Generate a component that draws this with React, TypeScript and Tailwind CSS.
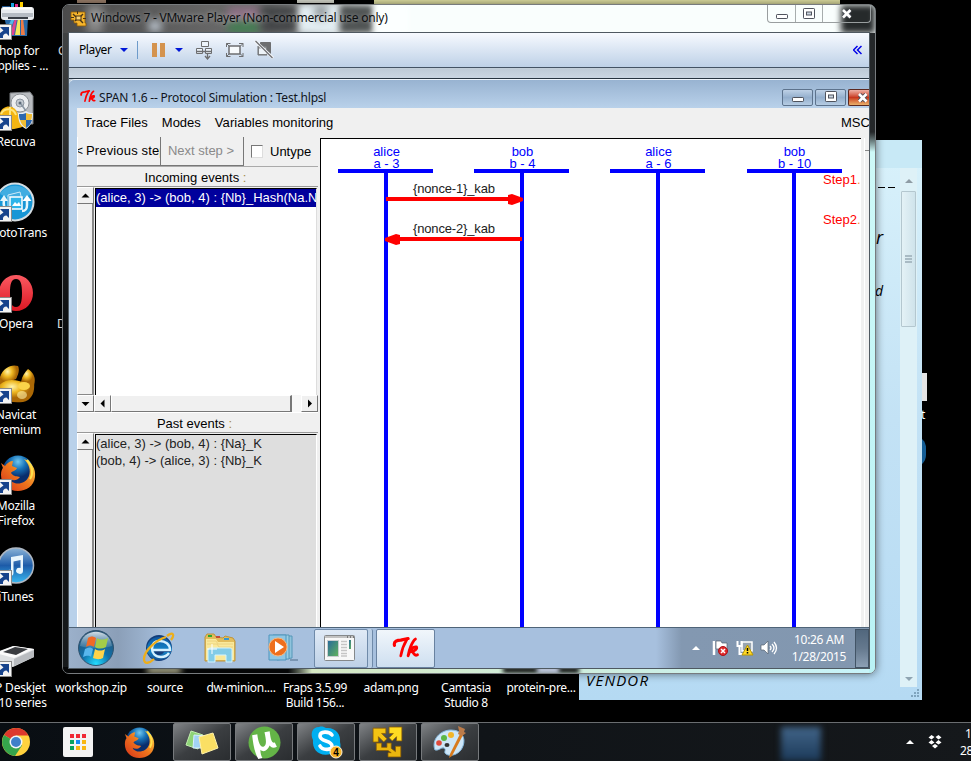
import type { ReactNode } from "react";

const UI = "font-['Noto_Sans',sans-serif]";
const TK = "font-['Liberation_Sans',Arial,sans-serif]";

/* ---------- Icons ---------- */

function ShortcutArrow() {
  return (
    <svg className="absolute left-0 bottom-0" width="12" height="16" viewBox="0 0 12 16">
      <rect x="-4" y="0.5" width="15.5" height="15" fill="#f4f4f4" stroke="#8a8a8a" />
      <path d="M0 3h9v9L6.500 9.500C4 9.500 2.500 11 3 14H0V9L3.500 6.500z" fill="#17438c" />
    </svg>
  );
}

function PrinterInkIcon() {
  return (
    <svg width="36" height="38" viewBox="0 0 36 38">
      <path d="M11 3h3v5h-3z" fill="#1ba5e0" />
      <path d="M15 4h3v5h-3z" fill="#e52b8a" />
      <path d="M20 2h3v5h-3z" fill="#ffcf00" />
      <path d="M2 6h8v4H2z" fill="#1b4f86" />
      <path d="M4 17h24l-1 19H9z" fill="#2a6aa8" />
      <path d="M12 18l-8 17h4l7-17z" fill="#53b9e9" />
      <path d="M15 18l-5 17h4l3-17z" fill="#df4390" />
      <path d="M18 18l-3 17h5v-17z" fill="#f4e75c" />
      <path d="M21 18v17h4l-2-17z" fill="#ee7b46" />
      <rect x="1" y="7" width="33" height="13" rx="3" fill="#e7eaee" />
      <path d="M2 13h31v4H2z" fill="#b5bbc3" />
      <path d="M8 17h20v2H8z" fill="#383d45" />
      <path d="M3 8.500h29" stroke="#fff" strokeWidth="2" />
    </svg>
  );
}

function RecuvaIcon() {
  return (
    <svg width="36" height="40" viewBox="0 0 36 40">
      <path d="M10 2l20-1 3 4v28H10z" fill="#b9bcc0" stroke="#7b7e82" />
      <circle cx="20" cy="12" r="9" fill="#eceef0" stroke="#8b9095" />
      <circle cx="20" cy="12" r="4" fill="#c3cad1" stroke="#8d96a0" />
      <circle cx="20" cy="12" r="1.500" fill="#5d6b7a" />
      <path d="M26 20l-5-7" stroke="#8794a1" strokeWidth="1.500" />
      <path d="M0 22c3-9 16-9 18 2l6 4v7c-8 4-17 4-24 1z" fill="#f4b512" />
      <path d="M1 23c3-6 12-7 15 1M10 16v12" stroke="#ffe57c" strokeWidth="2" fill="none" />
      <path d="M26 20c3 2 5 2 7 2 0 8-2 13-7 16-6-3-8-8-8-16 3 0 5 0 8-2z" fill="#e7edf4" />
      <path d="M26 22v7h-6c-1-2-1-4-1-6 3 0 5-0 7-1zM26 29h6c-1 4-3 6-6 8z" fill="#2c67ae" />
      <path d="M26 22c2 1 4 1 6 1 0 2 0 4-1 6h-5zM20 29h6v8c-3-2-5-4-6-8z" fill="#f1bd35" />
    </svg>
  );
}

function PhotoTransIcon() {
  return (
    <svg width="36" height="40" viewBox="0 0 36 40">
      <circle cx="15" cy="20" r="18.500" fill="#1796d6" stroke="#d5dde2" strokeWidth="2" />
      <path d="M0 12C6 1 24 1 31 12 23 18 10 18 0 12z" fill="#6bc3ec" opacity=".5" />
      <path d="M8 30C4 28 3 24 4 17" stroke="#e6f6fc" strokeWidth="2.500" fill="none" />
      <path d="M0 19l4-6 4 6z" fill="#e6f6fc" />
      <path d="M22 29c4 0 5-2 5-6v-6" stroke="#e6f6fc" strokeWidth="2.500" fill="none" />
      <path d="M22.500 19l4.500-6 4.500 6z" fill="#fff" />
      <path d="M8 25V13l12-3 1 4" stroke="#cdeaf8" fill="none" />
      <rect x="10" y="15" width="12" height="12" fill="#2eb4e9" stroke="#fff" strokeWidth="1.500" />
      <path d="M12 24l3-4 2 2 2-2 2 4z" fill="#fff" />
    </svg>
  );
}

function OperaIcon() {
  return (
    <svg width="36" height="40" viewBox="0 0 36 40">
      <defs>
        <linearGradient id="opera" x2="0" y2="1">
          <stop stopColor="#fb5a62" />
          <stop offset="1" stopColor="#dc1722" />
        </linearGradient>
      </defs>
      <path fillRule="evenodd" fill="url(#opera)" d="M16 2c10 0 17 8 17 18s-7 18-17 18-17-8-17-18S6 2 16 2zm0 4c-5 0-6 6-6 14s1 14 6 14 6-6 6-14-1-14-6-14z" />
    </svg>
  );
}

function NavicatIcon() {
  return (
    <svg width="36" height="40" viewBox="0 0 36 40">
      <defs>
        <radialGradient id="navi" cx=".4" cy=".3">
          <stop stopColor="#fff4ab" />
          <stop offset=".5" stopColor="#eeb822" />
          <stop offset="1" stopColor="#ab6805" />
        </radialGradient>
      </defs>
      <path d="M0 13C3 4 11 0 18 2c2 4 0 9-2 13L0 22z" fill="url(#navi)" />
      <path d="M28 5c6 4 8 9 6 16-5-1-9-1-13-3 1-6 4-10 7-13z" fill="url(#navi)" />
      <path d="M-3 24c6-9 15-9 22-7 6 2 11 3 15 2 1 9-2 17-11 19-8 1-16 0-21-4z" fill="url(#navi)" />
      <ellipse cx="24" cy="22" rx="6" ry="4" fill="#fbd34a" />
      <ellipse cx="22" cy="31" rx="5" ry="4" fill="#fff1a8" opacity=".6" />
    </svg>
  );
}

function FirefoxIcon({ size }: { size: number }) {
  return (
    <svg width={size} height={size} viewBox="0 0 36 36">
      <defs>
        <radialGradient id="fxb" cx=".5" cy=".2">
          <stop stopColor="#72c8ef" />
          <stop offset=".5" stopColor="#1672b8" />
          <stop offset="1" stopColor="#0a2d6c" />
        </radialGradient>
        <linearGradient id="fxo" x1="0" x2="1" y1="1" y2="0">
          <stop stopColor="#d6301a" />
          <stop offset=".5" stopColor="#ee761d" />
          <stop offset="1" stopColor="#ffe04b" />
        </linearGradient>
      </defs>
      <circle cx="18" cy="16" r="15.500" fill="url(#fxb)" />
      <path d="M1 8l4 3c2-3 5-5 8-5l-1 5 5 2c-1 3-5 3-6 5 3 4 6 3 9 4-3 4-7 4-10 2 2 6 15 7 19-3 2-6 0-12-5-17 8 3 12 10 11 18-1 9-9 14-17 14C8 36 1 29 1 20c0-4 1-6 2-7z" fill="url(#fxo)" />
      <path d="M27 5c5 5 7 13 3 19" stroke="#ffe04b" strokeWidth="2" fill="none" />
    </svg>
  );
}

function ITunesIcon() {
  return (
    <svg width="36" height="38" viewBox="0 0 36 38">
      <defs>
        <linearGradient id="itunes" x2="0" y2="1">
          <stop stopColor="#8bb4d8" />
          <stop offset=".5" stopColor="#1d5ba8" />
          <stop offset="1" stopColor="#38b9f2" />
        </linearGradient>
      </defs>
      <circle cx="16" cy="19.500" r="17.500" fill="url(#itunes)" stroke="#aeb7c2" strokeWidth="1.500" />
      <path d="M11 11l12-2v16a3.500 3 0 1 1-2.500-3V14L13.500 15.500V27a3.500 3 0 1 1-2.500-3z" fill="#e8f5fc" />
    </svg>
  );
}

function DeskjetIcon() {
  return (
    <svg className="mt-[2px]" width="36" height="36" viewBox="0 0 36 36">
      <path d="M-6 14l19-7 21 3v8L13 28-6 25z" fill="#dfe1e3" />
      <path d="M-5 14l19-7 20 3-20 9z" fill="#fbfbfb" />
      <path d="M3 13l12-5 13 2-12 6z" fill="#3a3c40" />
      <path d="M14 20l20-9v7L14 27z" fill="#b9bcc0" />
    </svg>
  );
}

function VmwareIcon({ size }: { size: number }) {
  return (
    <svg width={size} height={size} viewBox="0 0 30 30">
      <g stroke="#8b5b00" strokeWidth=".7">
        <path d="M1 2h12v5H9l5 5-3 3-5-5v5H1z" fill="#f4c413" />
        <path d="M16 1h12v13h-5v-4l-4 4-3-3 4-4h-4z" fill="#ffdb22" />
        <path d="M4 16h5v4h5v-4h4v5l4 3v-5h5v10H15v-4h3l-3-2H4z" fill="#eab60e" />
      </g>
    </svg>
  );
}

/* Small title-bar version of the VMware mark */
function VmwareMark() {
  return (
    <svg width="17" height="17" viewBox="0 0 17 17">
      <path d="M1 2h14v11h1v3H7v-3H4v-3H1z" fill="#f6b52c" stroke="#8d5a05" strokeWidth=".8" />
      <path d="M3 4l3 3M13 4l-3 3M5 11l2-2M13 13l-3-3" stroke="#4a3514" strokeWidth="1.400" />
      <rect x="6" y="6" width="5" height="4" fill="#f9d272" stroke="#4a3514" />
      <path d="M7.500 1v3M1 7.500h3M13 8.500h3" stroke="#4a3514" />
    </svg>
  );
}

function TkLogo({ width, height }: { width: number; height: number }) {
  return (
    <svg className="shrink-0" width={width} height={height} viewBox="0 0 26 21" fill="none" stroke="#ff0000" strokeLinecap="round" strokeLinejoin="round">
      <path d="M2 8C1 4 5 3 8 3l7-1.500" strokeWidth="3" />
      <path d="M14 2C11 7 9 12 8 18" strokeWidth="2.600" />
      <path d="M22 2c-3 2-6 10-7 16 2-6 5-9 8-8.500 1 2-2 4-5 4.500 3 0 2 5 6 3" strokeWidth="2.700" />
    </svg>
  );
}

function ChromeIcon() {
  return (
    <svg width="28" height="28" viewBox="0 0 28 28">
      <circle cx="14" cy="14" r="14" fill="#ffd23e" />
      <path d="M14 14L2 7A14 14 0 0 1 26.500 7.500H14z" fill="#dc382d" />
      <path d="M14 14L2 7A14 14 0 0 0 13 28l7-10.500z" fill="#35a44c" />
      <circle cx="14" cy="14" r="6.500" fill="#f2f5f7" />
      <circle cx="14" cy="14" r="5" fill="#3e7fc9" />
    </svg>
  );
}

function AppsIcon() {
  const colors = ["#f02a35", "#f02a35", "#f02a35", "#0ba35e", "#168bf2", "#f9b713", "#0ba35e", "#f9b713", "#f9b713"];
  return (
    <div className="grid h-[30px] w-[30px] grid-cols-[4px_4px_4px] content-center justify-center gap-[2px] rounded-[2px] bg-[#f3f3f3]">
      {colors.map((c, i) => (
        <span key={i} className="h-[4px] w-[4px]" style={{ backgroundColor: c }} />
      ))}
    </div>
  );
}

function StickyIcon() {
  return (
    <svg width="34" height="28" viewBox="0 0 34 28">
      <path d="M6 3l12 4-5 14L1 17z" fill="#8ed477" stroke="#c2edaf" />
      <path d="M9 7l14 1-1 12-14 0z" fill="#a2d3f5" stroke="#d8efff" />
      <path d="M14 9l14-4 5 15-16 6z" fill="#fadf64" stroke="#fff1a7" />
    </svg>
  );
}

function UtorrentIcon() {
  return (
    <svg width="33" height="33" viewBox="0 0 32 32">
      <circle cx="16" cy="16" r="15.500" fill="#64b447" />
      <path d="M4 9l5-1c1 8 3 13 6 12s3-5 1-14l5-1c1 8 2 12 5 11l2 4c-3 2-6 1-7-1-2 5-6 7-9 4 0 4 1 6 2 8l-4 1C6 25 5 17 4 9z" fill="#fff" />
    </svg>
  );
}

function SkypeIcon() {
  return (
    <svg width="36" height="34" viewBox="0 0 36 34">
      <path d="M11 2c3-1 5 0 7 1 9-1 15 6 14 14 2 7-2 13-9 12-12 3-19-4-18-14C2 9 4 2 11 2z" fill="#00aff0" />
      <path d="M24 10c-3-4-12-4-12 1 0 6 12 4 12 10 0 5-10 4-12 0" fill="none" stroke="#fff" strokeWidth="3.600" strokeLinecap="round" />
      <circle cx="28" cy="27" r="6" fill="#f8b42a" stroke="#fff4d7" />
      <text x="28" y="30.500" textAnchor="middle" fontSize="10" fontWeight="bold" fontFamily="Liberation Sans">4</text>
    </svg>
  );
}

function PaintIcon() {
  return (
    <svg width="34" height="34" viewBox="0 0 34 34">
      <path d="M2 25C-2 15 7 5 18 5s15 8 12 16c-3 9-13 11-17 8-3-2 1-4-2-6-3-1-5 3-9 2z" fill="#cde6f8" stroke="#86b8dd" />
      <circle cx="6" cy="18" r="2.800" fill="#df4a3b" />
      <circle cx="11" cy="13" r="3" fill="#5cb746" />
      <circle cx="18" cy="10" r="3" fill="#f1b52a" />
      <ellipse cx="14" cy="20" rx="2.500" ry="2" fill="#333" />
      <path d="M27 9l3 1-11 21-3 2 1-4z" fill="#d77a1d" />
      <path d="M25 1l7 3-1 3 2 1-4 3-4-2 1-3z" fill="#bb7b4a" />
    </svg>
  );
}

function StartOrb() {
  return (
    <svg width="38" height="38" viewBox="0 0 38 38">
      <defs>
        <radialGradient id="orb" cx=".5" cy=".95" r=".9">
          <stop stopColor="#24ddff" />
          <stop offset=".45" stopColor="#1070aa" />
          <stop offset="1" stopColor="#285375" />
        </radialGradient>
        <linearGradient id="shine" x2="0" y2="1">
          <stop stopColor="#f0f7fb" stopOpacity=".85" />
          <stop offset="1" stopColor="#b0cde0" stopOpacity=".15" />
        </linearGradient>
      </defs>
      <circle cx="19" cy="19" r="17.500" fill="url(#orb)" stroke="#30536f" />
      <path d="M3 17C5-2 33-2 35 17 25 20 13 20 3 17z" fill="url(#shine)" />
      <path d="M11 9c3-2 5-2 8 0l-2 9c-3-2-5-2-8 0z" fill="#f06a26" />
      <path d="M20 9c3 2 7 2 11 0l-2 9c-4 2-8 2-11 0z" fill="#a3cc48" />
      <path d="M8 20c3-2 6-2 8 0l-2 8c-2-2-5-1-8 0z" fill="#58b6ed" />
      <path d="M18 20c3 2 7 2 10 0l-2 9c-4 2-7 1-10 0z" fill="#ffd34a" />
    </svg>
  );
}

function IEIcon() {
  return (
    <svg width="34" height="34" viewBox="0 0 34 34">
      <defs>
        <linearGradient id="ie" x2="0" y2="1">
          <stop stopColor="#0f57a0" />
          <stop offset=".6" stopColor="#1487ca" />
          <stop offset="1" stopColor="#145394" />
        </linearGradient>
      </defs>
      <circle cx="18" cy="17" r="13" fill="#123d7a" />
      <path d="M18 6c-8 0-12 6-12 12s5 11 12 11c6 0 10-3 12-8h-7c-2 4-9 4-10-1h18C31 11 26 6 18 6z" fill="url(#ie)" />
      <path d="M12 19h17c0-6-5-9-10-9-6 0-8 4-8 8s3 8 9 8c4 0 6-1 8-4" fill="none" stroke="#d3f0ff" strokeWidth="2.400" />
      <path d="M26 5c6-5 8-1 4 4M25 6C15 9 3 20 3 28c0 6 6 4 10 0" fill="none" stroke="#edae1b" strokeWidth="2.300" />
    </svg>
  );
}

function ExplorerIcon() {
  return (
    <svg width="34" height="32" viewBox="0 0 34 32">
      <path d="M2 5l2-3h7l2 3 7 1 2-2 8 2 2 3v20H2z" fill="#e2bd5c" stroke="#bf943b" />
      <path d="M3 7h10l2 3h16v18H3z" fill="#fae99b" />
      <path d="M4 9h9l2 3h15M4 12h10l2 3h14" stroke="#ecd27f" fill="none" />
      <path d="M5 3h4v2H5z" fill="#2aa830" />
      <path d="M13 4h4v2h-4z" fill="#c34b37" />
      <path d="M21 6h5v2h-5z" fill="#3797d0" />
      <path d="M5 30V18c0-2 2-2 3-2h18c3 0 3 1 3 3v11h-6v-7H12v7z" fill="#83cce7" stroke="#d3f4ff" />
      <path d="M9 12v10M4 17h10" stroke="#fff" strokeWidth="1" />
    </svg>
  );
}

function MediaPlayerIcon() {
  return (
    <svg width="34" height="30" viewBox="0 0 34 30">
      <path d="M11 3h15v22l-15 2z" fill="#8fc3dc" stroke="#5597b8" />
      <path d="M7 2h16v24H7z" fill="#9bcee3" stroke="#5597b8" />
      <path d="M3 2h17v25H3z" fill="#8fc6e3" stroke="#4e95bd" />
      <path d="M24 27h8" stroke="#6b87a5" strokeWidth="1.500" />
      <circle cx="12" cy="14" r="9" fill="#ee6f1d" stroke="#f9b77b" />
      <path d="M9 8l9 6-9 6z" fill="#fff" />
    </svg>
  );
}

function AppWindowIcon() {
  return (
    <svg width="31" height="26" viewBox="0 0 31 26">
      <defs>
        <linearGradient id="shot" x2="1" y2="1">
          <stop stopColor="#27689b" />
          <stop offset="1" stopColor="#62b45c" />
        </linearGradient>
      </defs>
      <rect x=".5" y=".5" width="30" height="25" rx="1" fill="#f8f8f8" stroke="#85888a" />
      <path d="M1 1h29v2H1z" fill="#c2c2c2" />
      <path d="M23 2h1m2 0h1m2 0h1" stroke="#333" />
      <rect x="3.500" y="5.500" width="11" height="16" fill="url(#shot)" stroke="#c9cdd0" />
      <path d="M17 6.500h6m-6 3h6m-6 3h6m-6 3h6m-6 3h6m-6 2.500h6" stroke="#c5c5c5" strokeWidth="1.500" />
      <path d="M25 5h2v9h-2z" fill="url(#shot)" />
    </svg>
  );
}

function WindowGlyph({ kind }: { kind: "min" | "max" | "close" }) {
  return (
    <svg width="14" height="12" viewBox="0 0 14 12">
      {kind === "min" && <rect x="1.500" y="6.500" width="11" height="4" rx=".7" fill="#fff" stroke="#4f535d" />}
      {kind === "max" && (
        <g fill="#fff" stroke="#4f535d">
          <rect x="1.500" y=".5" width="11" height="10" rx=".7" />
          <rect x="4.500" y="4" width="5" height="3" fill="#cad6e1" />
        </g>
      )}
      {kind === "close" && (
        <g fill="none">
          <path d="M3.500 2.500l6.500 6.500m0-6.500l-6.500 6.500" stroke="#4a4d56" strokeWidth="4.500" />
          <path d="M3 2l7.500 7.500m0-7.500l-7.500 7.500" stroke="#fff" strokeWidth="2.600" />
        </g>
      )}
    </svg>
  );
}

/* ---------- Host desktop ---------- */

function DesktopIcon({ top, label, children }: { top: number; label: string[]; children?: ReactNode }) {
  return (
    <div className="absolute left-[-32px] flex w-[96px] flex-col items-center" style={{ top }}>
      <div className="relative ml-[32px] mr-auto h-[40px] w-[36px]">
        {children}
        <ShortcutArrow />
      </div>
      <div className="mt-[3px] text-center text-[12px] leading-[15px] tracking-[-0.2px] whitespace-nowrap">
        {label.map((l) => <div key={l}>{l}</div>)}
      </div>
    </div>
  );
}

function FileLabel({ left, lines }: { left: number; lines: string[] }) {
  return (
    <div className="absolute top-[680px] w-[100px] text-center text-[12px] leading-[15px] tracking-[-0.3px] whitespace-nowrap" style={{ left: left - 50 }}>
      {lines.map((l) => <div key={l}>{l}</div>)}
    </div>
  );
}

function StickyNote() {
  const ink = "italic font-['Open_Sans',sans-serif] leading-[20px]";
  return (
    <div className="absolute left-[579px] top-[140px] h-[560px] w-[343px] bg-linear-to-b from-[#d9f2fb] via-[#c3e2f5] to-[#b5daf3] text-black">
      <div className="h-[28px] bg-[#c8e9f6]" />
      <div className="ml-auto mr-[5px] flex h-[519px] w-[17px] flex-col items-center bg-[#def1f7]">
        <div className="mt-[11px] border-x-[4px] border-b-[4px] border-x-transparent border-b-[#8f9ca4]" />
        <div className="mt-[8px] flex h-[136px] w-[15px] flex-col items-center justify-center gap-[1px] rounded-[1px] border border-[#b4c7cf] bg-linear-to-r from-[#e4f2f6] to-[#cfe3eb]">
          <span className="h-[2px] w-[7px] bg-[#a9bbc4]" />
          <span className="h-[2px] w-[7px] bg-[#a9bbc4]" />
          <span className="h-[2px] w-[7px] bg-[#a9bbc4]" />
        </div>
        <div className="mt-auto mb-[6px] border-x-[4px] border-t-[4px] border-x-transparent border-t-[#8fa4b1]" />
      </div>
      <svg className="absolute right-[2px] bottom-[2px]" width="9" height="9" viewBox="0 0 9 9" fill="#7fa4bd">
        <path d="M6 0h2v2H6zM3 3h2v2H3zM6 3h2v2H6zM0 6h2v2H0zM3 6h2v2H3zM6 6h2v2H6z" />
      </svg>
      <span className="absolute left-[299px] top-[47px] h-px w-[7px] bg-black" />
      <span className="absolute left-[309px] top-[47px] h-px w-[7px] bg-black" />
      <span className={`absolute left-[297px] top-[87px] text-[18px] ${ink}`}>r</span>
      <span className={`absolute left-[296px] top-[141px] text-[14px] ${ink}`}>d</span>
      <span className={`absolute left-[7px] top-[530px] text-[15px] tracking-[1.2px] ${ink}`}>VENDOR</span>
    </div>
  );
}

function TaskButton({ children }: { children: ReactNode }) {
  return (
    <div className="mr-[4px] flex h-[38px] w-[58px] shrink-0 items-center justify-center rounded-[2px] border border-[#777a7d] bg-linear-to-br from-[#808386] via-[#3b3e41] to-[#2a2d30]">
      {children}
    </div>
  );
}

function HostTaskbar() {
  return (
    <div className="absolute inset-x-0 top-[722px] flex h-[39px] items-center overflow-hidden border-t border-[#6a6d70] bg-linear-to-r from-[#090e13] via-[#101418] to-[#15181b]">
      <div className="ml-[2px] w-[61px] shrink-0"><ChromeIcon /></div>
      <div className="w-[61px] shrink-0"><AppsIcon /></div>
      <div className="w-[49px] shrink-0"><FirefoxIcon size={31} /></div>
      <TaskButton><StickyIcon /></TaskButton>
      <TaskButton><UtorrentIcon /></TaskButton>
      <TaskButton><SkypeIcon /></TaskButton>
      <TaskButton><VmwareIcon size={32} /></TaskButton>
      <TaskButton><PaintIcon /></TaskButton>
      <div className="ml-[298px] h-[34px] w-[40px] shrink-0 self-end bg-linear-to-b from-[#426589] to-[#1c3a59] blur-[3px]" />
      <div className="ml-[85px] shrink-0 border-x-[4px] border-b-[4px] border-x-transparent border-b-white" />
      <svg className="ml-[14px] shrink-0" width="14" height="14" viewBox="0 0 14 14" fill="#fff">
        <path d="M3.500 0l3 2-3 2.500L.500 2.500zM10.500 0l3 2.500-3 2L7.500 2zM3.500 5l3 2.500-3 2-3-2zM10.500 5l3 2.500-3 2-3-2zM4 11l3-2 3 2-3 2.500z" />
      </svg>
      <div className="ml-[18px] w-[60px] shrink-0 text-[12px] leading-[17px] tracking-[-0.3px] text-white">
        <div className="pl-[5px]">10:26</div>
        <div>28-01</div>
      </div>
    </div>
  );
}

/* ---------- SPAN window ---------- */

function ScrollButton({ dir }: { dir: "up" | "down" | "left" | "right" }) {
  const path = { up: "M.5 6.500h8L4.500 2.500z", down: "M.5 3h8L4.500 7z", left: "M6.500 .5v8L2.500 4.500z", right: "M3 .5v8l4-4z" }[dir];
  return (
    <div className="flex h-[17px] w-[17px] shrink-0 items-center justify-center border border-t-white border-l-white border-r-[#777] border-b-[#777] bg-[#f0f0f0]">
      <svg width="9" height="9" viewBox="0 0 9 9"><path d={path} fill="#000" /></svg>
    </div>
  );
}

function EventPanel() {
  return (
    <div className="flex h-[490px] w-[243px] shrink-0 flex-col text-[13px]">
      <div className="flex h-[30px] w-[241px] border-b border-[#aaa]">
        <div className="flex h-[29px] w-[84px] items-center overflow-hidden border-r border-b border-l border-[#777] border-l-white pb-px whitespace-nowrap">
          <span className="flex w-[5px] shrink-0 justify-end overflow-hidden">&lt;</span>
          <span className="ml-[3px] w-[74px] overflow-hidden tracking-[0.15px]">Previous step</span>
        </div>
        <div className="flex h-[29px] w-[83px] items-center justify-center border-r border-b border-[#777] pr-[2px] text-[#8a8a8a] whitespace-nowrap">Next step &gt;</div>
        <div className="mt-[8px] ml-[7px] h-[13px] w-[12px] border border-t-[#777] border-l-[#777] border-r-[#ddd] border-b-[#ddd] bg-white" />
        <span className="ml-[7px] leading-[30px]">Untype</span>
      </div>
      <div className="h-[20px] w-[241px] border-b border-[#999] pr-[4px] text-center leading-[22px]">Incoming events <span className="text-[#a58a4a]">:</span></div>
      <div className="flex h-[208px] w-[241px]">
        <div className="flex w-[17px] shrink-0 flex-col">
          <ScrollButton dir="up" />
          <div className="flex-1 border-r-2 border-b border-l border-[#888] border-l-white" />
        </div>
        <div className="mt-px ml-[1px] w-[222px] overflow-hidden border-t border-r border-l border-black border-r-[#ddd] bg-white whitespace-nowrap">
          <div className="h-[18px] bg-[#00009c] leading-[17px] text-white">(alice, 3) -&gt; (bob, 4) : {"{Nb}_Hash(Na.Nb)"}</div>
        </div>
      </div>
      <div className="flex h-[18px] w-[241px] border-b border-white">
        <ScrollButton dir="down" />
        <ScrollButton dir="left" />
        <div className="h-[17px] w-[181px] border border-r-2 border-[#777] border-t-white border-l-white" />
        <div className="h-[17px] w-[9px] bg-[#f7f7f7]" />
        <ScrollButton dir="right" />
      </div>
      <div className="h-[20px] w-[241px] border-b border-[#999] pr-[6px] text-center leading-[21px]">Past events <span className="text-[#a58a4a]">:</span></div>
      <div className="flex h-[194px] w-[241px]">
        <div className="flex w-[17px] shrink-0 flex-col">
          <ScrollButton dir="up" />
          <div className="flex-1 border-r-2 border-l border-[#888] border-l-white" />
        </div>
        <div className="mt-px ml-[1px] w-[222px] border-t border-r border-l border-black border-r-white bg-[#dedede] leading-[17px] text-[#222] whitespace-nowrap">
          <div>(alice, 3) -&gt; (bob, 4) : {"{Na}_K"}</div>
          <div>(bob, 4) -&gt; (alice, 3) : {"{Nb}_K"}</div>
        </div>
      </div>
    </div>
  );
}

const AGENTS = [
  { x: 386, bar: 338, name: "alice", id: "a - 3" },
  { x: 522, bar: 474, name: "bob", id: "b - 4" },
  { x: 658, bar: 610, name: "alice", id: "a - 6" },
  { x: 794, bar: 747, name: "bob", id: "b - 10" },
];

function SequenceChart() {
  return (
    <svg className="shrink-0 border-t border-l border-black bg-white" width="541" height="489" viewBox="321 139 540 488" fontFamily="Liberation Sans, Arial, sans-serif" fontSize="13">
      {AGENTS.map((a) => (
        <g key={a.x} fill="#0000ff" textAnchor="middle">
          <text x={a.x + 0.5} y="156">{a.name}</text>
          <text x={a.x + 0.5} y="168">{a.id}</text>
          <rect x={a.bar} y="169" width="95" height="4" />
          <rect x={a.x - 2} y="169" width="4" height="460" />
        </g>
      ))}
      <g fill="#ff0000">
        <rect x="386" y="197" width="130" height="4" />
        <path d="M508 195l4-1 11 4v3l-11 4-4-1z" />
        <rect x="392" y="237" width="130" height="4" />
        <path d="M400 235l-4-1-11 4v3l11 4 4-1z" />
        <text x="823" y="184">Step1<tspan fill="#ff8a30">.</tspan></text>
        <text x="823" y="224">Step2<tspan fill="#ff8a30">.</tspan></text>
      </g>
      <g fill="#222" textAnchor="middle">
        <text x="454" y="193" textLength="82">{"{nonce-1}_kab"}</text>
        <text x="454" y="233" textLength="82">{"{nonce-2}_kab"}</text>
      </g>
    </svg>
  );
}

function SpanWindow() {
  const buttons = "flex h-[17px] w-[31px] shrink-0 items-center justify-center rounded-[2px] border border-[#5d738d] bg-linear-to-b from-[#bed1e6] via-[#94afcd] to-[#b6cce3]";
  return (
    <div className="flex h-[548px] flex-col overflow-hidden rounded-tl-[6px] border-t border-[#eef5fc] bg-[#b9d1ea] pl-[8px]">
      <div className="-ml-[8px] flex h-[28px] shrink-0 items-center bg-linear-to-b from-[#98b3d1] to-[#b9d1ea] pl-[11px]">
        <div className="mt-[5px]"><TkLogo width={16} height={13} /></div>
        <span className={`mt-[7px] ml-[3px] text-[12px] tracking-[-0.21px] whitespace-nowrap text-[#10151d] ${UI}`}>SPAN 1.6 -- Protocol Simulation : Test.hlpsl</span>
        <div className="mt-[6px] ml-auto flex gap-[2px] overflow-hidden">
          <div className={buttons}><WindowGlyph kind="min" /></div>
          <div className={buttons}><WindowGlyph kind="max" /></div>
          <div className="h-[17px] w-[21px] overflow-hidden rounded-l-[2px] border border-r-0 border-[#5b2820] bg-linear-to-b from-[#edb1a6] via-[#c7361c] to-[#e8b06a] pt-[2px] pl-[7px]">
            <WindowGlyph kind="close" />
          </div>
        </div>
      </div>
      <div className={`flex flex-1 flex-col bg-[#f0f0f0] text-black ${TK}`}>
        <div className="flex h-[29px] shrink-0 items-center overflow-hidden pl-[7px] text-[13px] whitespace-nowrap">
          <span>Trace Files</span>
          <span className="ml-[14px]">Modes</span>
          <span className="ml-[14px] tracking-[0.05px]">Variables monitoring</span>
          <span className="ml-auto w-[28px] overflow-hidden">MSC</span>
        </div>
        <div className="flex h-[490px] overflow-hidden">
          <EventPanel />
          <div className="mt-px"><SequenceChart /></div>
          <div className="mt-px ml-[3px] flex-1 border-l border-white">
            <div className="h-[13px] border-b border-[#888]" />
          </div>
        </div>
      </div>
    </div>
  );
}

function GuestTaskbar() {
  return (
    <div className={`flex h-[41px] items-center border-t border-[#4f6478] bg-[#a7c0de] ${UI}`}>
      <div className="flex h-[40px] w-[245px] shrink-0 items-center bg-linear-to-r from-[#9bb0ca] via-[#8b9fb8] via-20% to-[#a7c0de] to-40%">
        <div className="ml-[8px] w-[64px]"><StartOrb /></div>
        <div className="w-[62px]"><IEIcon /></div>
        <div className="w-[64px]"><ExplorerIcon /></div>
        <div className="-ml-px"><MediaPlayerIcon /></div>
      </div>
      <div className="flex h-[39px] w-[54px] shrink-0 items-center justify-center rounded-[2px] border border-[#6f8aa9] bg-linear-to-b from-[#e0eaf6] to-[#bed1e7] pr-[3px]"><AppWindowIcon /></div>
      <div className="h-[39px] w-[5px] shrink-0 rounded-r-[2px] border-r border-[#6f8aa9] bg-[#bcd0e6]" />
      <div className="ml-[3px] flex h-[39px] w-[59px] shrink-0 items-center justify-center rounded-[2px] border border-[#6982a0] bg-linear-to-b from-[#f1f6fb] to-[#cedff0] pb-px"><TkLogo width={28} height={22} /></div>
      <div className="ml-auto flex h-[40px] items-center bg-linear-to-r from-transparent via-[#8398b1] via-12% to-[#8297af] pl-[36px]">
        <div className="border-x-[4px] border-b-[4px] border-x-transparent border-b-white" />
        <svg className="ml-[11px]" width="18" height="18" viewBox="0 0 18 18">
          <path d="M3 2v14" stroke="#fff" strokeWidth="2.500" />
          <path d="M5 2h5l1 2h5v8h-5l-1-2H5z" fill="#fff" stroke="#53606e" strokeWidth=".7" />
          <circle cx="12" cy="12" r="4.500" fill="#e02a2b" stroke="#a81219" />
          <path d="M10 10l4 4m0-4l-4 4" stroke="#fff" strokeWidth="1.500" />
        </svg>
        <svg className="ml-[7px]" width="18" height="18" viewBox="0 0 18 18">
          <path d="M6 3h10v9H6z" fill="#98a5b1" stroke="#fff" strokeWidth="1.500" />
          <path d="M1.500 2v5h4V2M3.500 7v8h5" stroke="#fff" strokeWidth="2" fill="none" />
          <path d="M11.500 6L17 16H6z" fill="#ffd827" stroke="#ba9705" />
          <path d="M11.500 9v3m0 1v1.500" stroke="#000" strokeWidth="1.500" />
        </svg>
        <svg className="ml-[6px]" width="18" height="18" viewBox="0 0 18 18" fill="none">
          <path d="M1 6h3l4-4v13l-4-4H1z" fill="#fff" stroke="#56626f" strokeWidth=".7" />
          <path d="M10 7q2 2 0 4M12 5q4 4 0 8M14 3q5 6 0 12" stroke="#fff" strokeWidth="1.300" />
        </svg>
        <div className="ml-[9px] w-[64px] text-center text-[12px] leading-[17px] tracking-[-0.3px] text-white whitespace-nowrap">
          <div>10:26 AM</div>
          <div>1/28/2015</div>
        </div>
        <div className="ml-[4px] h-[39px] w-[14px] border border-[#425466] bg-linear-to-b from-[#51677d] via-[#65798e] to-[#8da0b5]" />
      </div>
    </div>
  );
}

/* ---------- VMware Player window ---------- */

function ToolbarIcons() {
  return (
    <svg width="80" height="20" viewBox="0 0 80 20" fill="none" stroke="#6d6e70">
      <path d="M6.500 1.500h7v5h-7zM1.500 8.500h6v5h-6zM10.500 8.500h6v5h-6z" fill="#edf4fb" />
      <path d="M1 11.500h16M12.500 13v6M10 16l2.500 3 2.500-3" strokeWidth="1.300" />
      <rect x="34" y="6" width="11" height="8" fill="#f7fafc" strokeWidth="1.500" />
      <path d="M31.500 7V3.500h4M44 3.500h4V7M31.500 13v3.500h4M44 16.500h4V13M31.500 3.500l3 3M48 3.500l-3 3M31.500 16.500l3-3M48 16.500l-3-3" />
      <path d="M65.500 2.500h10v11h-10z" fill="#6d6e70" />
      <path d="M63 6h9v9h-9z" fill="#8b8d90" />
      <path d="M64 8.500h7v5.500h-7z" fill="#edf3f8" stroke="none" />
      <path d="M60 1l18 17" stroke="#f4f7fb" strokeWidth="3" />
      <path d="M60.500 1l17 17" strokeWidth="1.300" />
    </svg>
  );
}

function DropArrow() {
  return <div className="border-x-[4px] border-t-[4px] border-x-transparent border-t-[#0017d8]" />;
}

function VmwareWindow() {
  return (
    <div className="absolute left-[62px] top-[4px] flex h-[670px] w-[814px] flex-col overflow-hidden rounded-[7px] border border-[#777b7e] bg-linear-to-r from-[#222426] via-[#d7e8c8] via-50% to-[#c8f5fa] px-[6px] text-black shadow-[0_0_8px_#0008]">
      {/* translucent frame tints along the window's edges */}
      <div className="absolute left-0 top-0 h-full w-[6px] bg-linear-to-b from-[#464848] via-[#090b0d] to-[#16191b]" />
      <div className="absolute right-0 top-0 h-full w-[6px] bg-linear-to-b from-[#242729] from-19% via-[#cef9f8] via-22% to-[#b9f2f5]" />
      <div className="absolute right-[9px] bottom-0 left-0 h-[6px] bg-linear-to-r from-[#050607] from-28% via-[#d5e8c3] via-31% to-[#c7f3f9]" />
      <div className="absolute bottom-0 left-[440px] h-[6px] w-[76px] bg-[#080808] blur-[2px]" />
      <div className="absolute bottom-0 left-[474px] h-[6px] w-[22px] bg-[#d4def5] blur-[2px]" />
      <div className="absolute bottom-0 left-[84px] h-[6px] w-[34px] bg-[#c9c7a2] blur-[3px]" />
      <div className="relative -mx-[6px] flex h-[28px] shrink-0 overflow-hidden bg-linear-to-r from-[#4b4b4b] from-0% via-[#707070] via-25% to-[#f9fefd] to-38% pl-[7px]">
        <div className="absolute left-[24px] top-0 h-[28px] w-[16px] bg-[#8d8d8d] blur-[5px]" />
        <div className="absolute left-[86px] top-[16px] h-[10px] w-[12px] bg-[#c5cfda] blur-[4px]" />
        <div className="absolute left-[165px] top-[2px] h-[14px] w-[32px] bg-[#8f6f86] blur-[4px]" />
        <div className="absolute left-[165px] top-[17px] h-[11px] w-[32px] bg-[#3f7f50] blur-[4px]" />
        <div className="absolute left-[198px] top-0 h-[28px] w-[36px] bg-[#424446] blur-[4px]" />
        <div className="absolute left-[236px] top-0 h-[28px] w-[40px] bg-[#e3eef3] blur-[3px]" />
        <div className="absolute left-[252px] top-0 h-[14px] w-[12px] bg-[#8e9598] blur-[4px]" />
        <div className="absolute left-[277px] top-0 h-[28px] w-[33px] bg-[#4e5252] blur-[3px]" />
        <div className="absolute left-[312px] top-0 h-[28px] w-[34px] bg-[#fcffff] blur-[3px]" />
        <div className="absolute top-0 right-0 h-[28px] w-[34px] bg-[#262a2b] blur-[3px]" />
        <div className="relative mt-[5px] h-[17px]"><VmwareMark /></div>
        <span className={`relative mt-[4px] ml-[4px] text-[12px] leading-[18px] tracking-[-0.24px] whitespace-nowrap text-[#0c0e10] [text-shadow:0_0_5px_#fff8] ${UI}`}>Windows 7 - VMware Player (Non-commercial use only)</span>
        <div className="relative mr-[4px] ml-auto flex h-[18px] rounded-b-[4px] border border-t-0 border-[#999e9f]">
          <div className="flex w-[28px] items-center justify-center border-r border-[#a7adad]"><WindowGlyph kind="min" /></div>
          <div className="flex w-[27px] items-center justify-center border-r border-[#a7adad]"><WindowGlyph kind="max" /></div>
          <div className="flex w-[47px] items-center justify-center"><WindowGlyph kind="close" /></div>
        </div>
      </div>
      <div className="relative flex h-[635px] w-[800px] shrink-0 flex-col overflow-hidden bg-[#c2ced9] outline outline-[#4f5961]">
        <div className={`flex h-[35px] shrink-0 items-center border-b border-[#435364] bg-linear-to-b from-[#f7faff] to-[#bed1e7] pl-[10px] ${UI}`}>
          <span className="text-[12px] tracking-[-0.4px]">Player</span>
          <div className="ml-[8px]"><DropArrow /></div>
          <div className="ml-[9px] h-[18px] w-px bg-[#6e9bca]" />
          <div className="ml-[14px] flex gap-[3px]"><span className="h-[14px] w-[5px] bg-[#d4934e]" /><span className="h-[14px] w-[5px] bg-[#d4934e]" /></div>
          <div className="mr-[12px] ml-[10px]"><DropArrow /></div>
          <ToolbarIcons />
          <svg className="mr-[7px] ml-auto" width="9" height="10" viewBox="0 0 9 10" fill="none" stroke="#0000e8" strokeWidth="1.500"><path d="M4.500 1l-4 4 4 4M8.500 1l-4 4 4 4" /></svg>
        </div>
        <div className="mt-[1px] h-[10px] shrink-0 border-b border-[#273540] bg-linear-to-b from-[#becbd7] to-[#cad6e2]" />
        <SpanWindow />
        <GuestTaskbar />
      </div>
    </div>
  );
}

export default function App() {
  return (
    <main className={`relative h-[761px] w-[971px] overflow-hidden bg-black text-white ${UI}`}>
      <div className="absolute left-[77px] top-0 h-[3px] w-[29px] bg-[#997e6a]" />
      <div className="absolute left-[297px] top-0 h-[3px] w-[37px] bg-[#d5d7cc]" />
      <div className="absolute left-[374px] top-0 h-[4px] w-[466px] bg-[#dfdfa2]" />
      <DesktopIcon top={0} label={["Shop for", "Supplies - ..."]}><PrinterInkIcon /></DesktopIcon>
      <DesktopIcon top={91} label={["Recuva"]}><RecuvaIcon /></DesktopIcon>
      <DesktopIcon top={182} label={["PhotoTrans"]}><PhotoTransIcon /></DesktopIcon>
      <DesktopIcon top={273} label={["Opera"]}><OperaIcon /></DesktopIcon>
      <DesktopIcon top={364} label={["Navicat", "Premium"]}><NavicatIcon /></DesktopIcon>
      <DesktopIcon top={455} label={["Mozilla", "Firefox"]}><FirefoxIcon size={36} /></DesktopIcon>
      <DesktopIcon top={546} label={["iTunes"]}><ITunesIcon /></DesktopIcon>
      <DesktopIcon top={637} label={["HP Deskjet", "1010 series"]}><DeskjetIcon /></DesktopIcon>
      <span className="absolute left-[58px] top-[43px] text-[12px] leading-[15px]">C</span>
      <span className="absolute left-[57px] top-[316px] text-[12px] leading-[15px]">D</span>
      <div className="absolute left-[910px] top-[373px] h-[28px] w-[17px] bg-[#e5e5e5]" />
      <span className="absolute left-[921px] top-[407px] text-[12px] leading-[15px]">t</span>
      <div className="absolute left-[902px] top-[436px] h-[31px] w-[24px] rounded-full bg-[#145d95]" />
      <StickyNote />
      <VmwareWindow />
      <FileLabel left={91} lines={["workshop.zip"]} />
      <FileLabel left={165} lines={["source"]} />
      <FileLabel left={241} lines={["dw-minion...."]} />
      <FileLabel left={315} lines={["Fraps 3.5.99", "Build 156..."]} />
      <FileLabel left={391} lines={["adam.png"]} />
      <FileLabel left={466} lines={["Camtasia", "Studio 8"]} />
      <FileLabel left={541} lines={["protein-pre..."]} />
      <HostTaskbar />
    </main>
  );
}
